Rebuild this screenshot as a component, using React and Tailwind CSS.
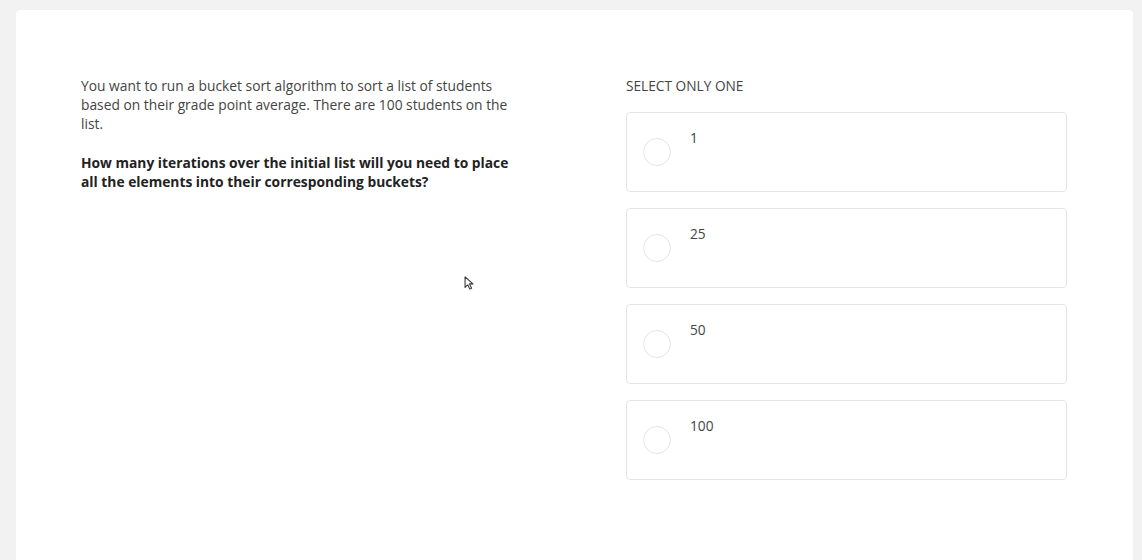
const options = ['1', '25', '50', '100'];

const Cursor = () => (
  <svg className="absolute left-[448px] top-[266px]" width="10" height="14" viewBox="0 0 11 16">
    <path d="M1 1 L1 13 L4 10 L6.5 15 L8.5 14 L6 9 L10 9 Z" fill="#fff" stroke="#333" strokeWidth="1.2" strokeLinejoin="round" />
  </svg>
);

export default function App() {
  return (
    <div className="min-h-[560px] bg-[#f2f2f2] pl-4 pr-[9px] pt-[10px]" style={{ fontFamily: '"Open Sans", "Liberation Sans", sans-serif' }}>
      <div className="relative min-h-[550px] rounded-t bg-white px-[65px] pt-[66px]">
        <div className="flex gap-[115px]">
          <div className="w-[430px] shrink-0 text-[13.8px] leading-[19px] text-[#444]">
            <p>
              You want to run a bucket sort algorithm to sort a list of students based on their grade point average. There are 100 students on the list.
            </p>
            <p className="mt-[20px] font-bold text-[#222]">
              How many iterations over the initial list will you need to place all the elements into their corresponding buckets?
            </p>
          </div>
          <div className="w-[441px] shrink-0">
            <div className="text-[13.7px] leading-[19px] text-[#444]">SELECT ONLY ONE</div>
            <div className="mt-[17px] flex flex-col gap-[16px]">
              {options.map((opt) => (
                <label
                  key={opt}
                  className="flex h-[80px] cursor-pointer rounded border border-[#e6e6e6] bg-white pl-[16px] pr-4"
                >
                  <span className="mt-[25px] h-[28px] w-[28px] shrink-0 rounded-full border border-[#e4e4e4] bg-white" />
                  <span className="ml-[19px] mt-[15px] text-[13.7px] leading-[19px] text-[#444]">{opt}</span>
                </label>
              ))}
            </div>
          </div>
        </div>
        <Cursor />
      </div>
    </div>
  );
}
